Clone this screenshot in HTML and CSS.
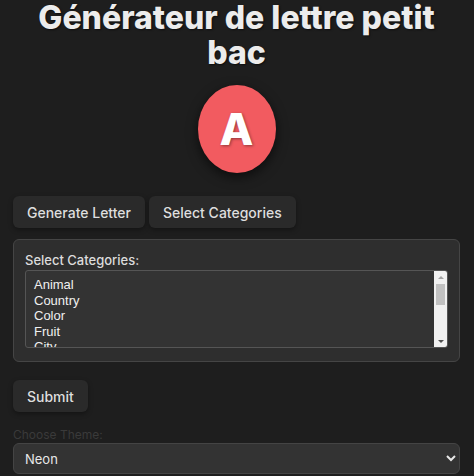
FILE: index.html
```html
<!DOCTYPE html>
<html lang="fr">
<head>
    <meta charset="UTF-8">
    <meta name="viewport" content="width=device-width, initial-scale=1.0">
    <title>Générateur de lettre petit bac</title>
    <link rel="stylesheet" href="styles.css">
</head>
<body>
    <h1>Générateur de lettre petit bac</h1>

    <div class="letter-wrap">
        <div class="letter">A</div>
    </div>

    <div class="actions">
        <button>Generate Letter</button>
        <button>Select Categories</button>
    </div>

    <div class="categories">
        <label for="categories">Select Categories:</label>
        <div class="listbox">
            <select id="categories" multiple size="5">
                <option>Animal</option>
                <option>Country</option>
                <option>Color</option>
                <option>Fruit</option>
                <option>City</option>
                <option>Job</option>
                <option>Sport</option>
                <option>Movie</option>
            </select>
            <div class="scrollbar">
                <span class="arrow up"></span>
                <span class="track"><span class="thumb"></span></span>
                <span class="arrow down"></span>
            </div>
        </div>
    </div>

    <button class="submit">Submit</button>

    <div class="theme">
        <label for="theme">Choose Theme:</label>
        <select id="theme">
            <option>Neon</option>
            <option>Dark</option>
            <option>Light</option>
        </select>
    </div>
</body>
</html>
```

FILE: styles.css
```css
body {
    font-family: Inter, "Noto Sans", sans-serif;
    margin: 0;
    padding: 0 14px 0 13px;
    background-color: #1e1e1e;
    color: #e0e0e0;
}
h1 {
    margin: 0;
    font-size: 32px;
    line-height: 35px;
    font-weight: 800;
    text-align: center;
    color: #ececec;
    text-shadow: 1px 1px 2px rgba(0,0,0,0.6);
}
.letter-wrap {
    display: flex;
    justify-content: center;
    margin: 15px 0 23px;
}
.letter {
    width: 78px;
    height: 88px;
    border-radius: 50%;
    background-color: #f25b60;
    color: white;
    font-size: 44px;
    font-weight: 800;
    display: flex;
    align-items: center;
    justify-content: center;
    box-shadow: 0 4px 12px rgba(0,0,0,0.6);
    text-shadow: 1px 1px 3px rgba(0,0,0,0.4);
}
.actions {
    display: flex;
    gap: 4px;
}
button {
    font-family: Inter, "Noto Sans", sans-serif;
    font-size: 14px;
    font-weight: 500;
    background-color: #2a2a2a;
    color: #dedede;
    padding: 0 14px;
    height: 32px;
    border: none;
    border-radius: 6px;
    box-shadow: 0 2px 5px rgba(0,0,0,0.35);
    cursor: pointer;
}
.categories {
    margin-top: 11px;
    background-color: #2e2e2e;
    border: 1px solid #454545;
    border-radius: 6px;
    padding: 12px 11px 13px;
}
.categories label {
    display: block;
    font-size: 13px;
    font-weight: 500;
    color: #dcdcdc;
    margin-bottom: 2px;
}
.listbox {
    display: flex;
    height: 78px;
    box-sizing: border-box;
    border: 1px solid #555;
    border-radius: 3px;
    background-color: #333;
    overflow: hidden;
}
.listbox select {
    flex: 1;
    min-width: 0;
    background-color: transparent;
    color: #f0f0f0;
    border: none;
    outline: none;
    padding: 6px 0 0 4px;
    font-family: "Liberation Sans", Arial, sans-serif;
    font-size: 13px;
    overflow: hidden;
}
.listbox option {
    padding: 0 4px;
    line-height: 15px;
}
.scrollbar {
    width: 13px;
    display: flex;
    flex-direction: column;
    background-color: #f1f1f1;
}
.arrow {
    height: 12px;
    display: flex;
    align-items: center;
    justify-content: center;
}
.arrow::before {
    content: "";
    border-left: 3px solid transparent;
    border-right: 3px solid transparent;
}
.arrow.up::before {
    border-bottom: 3px solid #a3a3a3;
}
.arrow.down::before {
    border-top: 3px solid #505050;
}
.track {
    flex: 1;
    padding: 1px 2px;
}
.thumb {
    display: block;
    height: 21px;
    background-color: #c1c1c1;
}
.submit {
    margin-top: 18px;
}
.theme {
    margin-top: 15px;
}
.theme label {
    display: block;
    font-size: 12px;
    color: #3a3a3a;
    margin-bottom: 1px;
}
.theme select {
    width: 100%;
    height: 31px;
    background-color: #333;
    color: #e8e8e8;
    border: 1px solid #444;
    border-radius: 6px;
    padding: 0 7px;
    font-family: Inter, "Noto Sans", sans-serif;
    font-size: 13px;
}
```
